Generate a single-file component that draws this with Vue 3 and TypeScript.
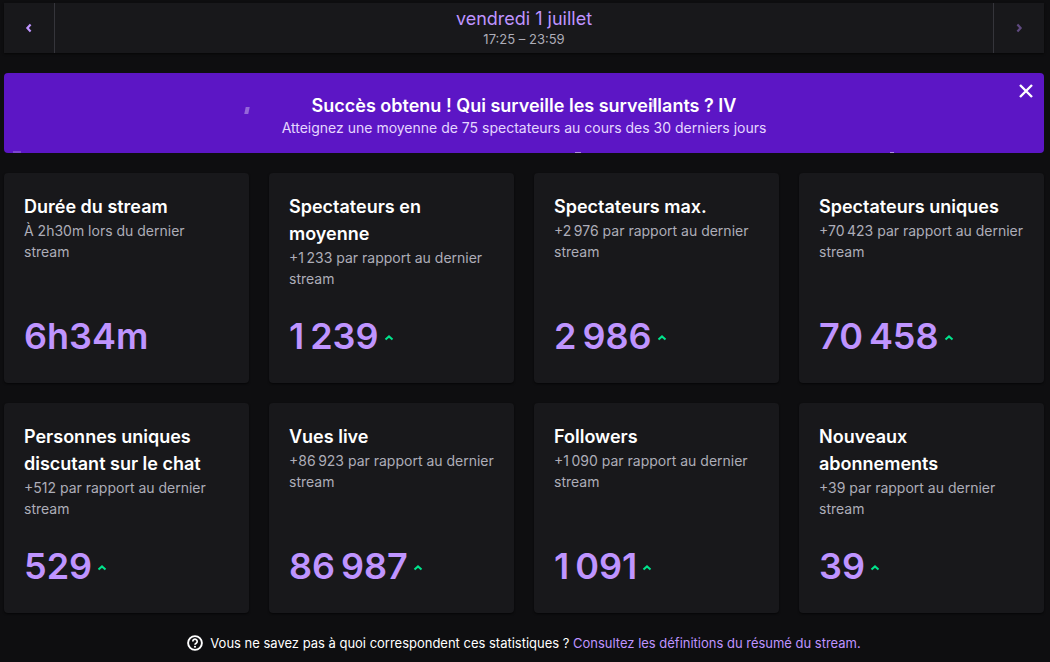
<script setup lang="ts">
interface Stat {
  title: string
  note: string
  value: string
  up: boolean
}

const stats: Stat[] = [
  { title: 'Durée du stream', note: 'À 2h30m lors du dernier stream', value: '6h34m', up: false },
  { title: 'Spectateurs en moyenne', note: '+1\u202f233 par rapport au dernier stream', value: '1\u202f239', up: true },
  { title: 'Spectateurs max.', note: '+2\u202f976 par rapport au dernier stream', value: '2\u202f986', up: true },
  { title: 'Spectateurs uniques', note: '+70\u202f423 par rapport au dernier stream', value: '70\u202f458', up: true },
  { title: 'Personnes uniques discutant sur le chat', note: '+512 par rapport au dernier stream', value: '529', up: true },
  { title: 'Vues live', note: '+86\u202f923 par rapport au dernier stream', value: '86\u202f987', up: true },
  { title: 'Followers', note: '+1\u202f090 par rapport au dernier stream', value: '1\u202f091', up: true },
  { title: 'Nouveaux abonnements', note: '+39 par rapport au dernier stream', value: '39', up: true },
]
</script>

<template>
  <div class="page">
    <header class="date-bar">
      <button class="nav nav--prev" aria-label="Précédent">
        <svg width="10" height="10" viewBox="0 0 10 10"><path d="M6.6 1.6 3.4 5l3.2 3.4" fill="none" stroke="currentColor" stroke-width="2.2" /></svg>
      </button>
      <div class="date">
        <div class="date-title">vendredi 1 juillet</div>
        <div class="date-time">17:25 – 23:59</div>
      </div>
      <button class="nav nav--next" aria-label="Suivant">
        <svg width="10" height="10" viewBox="0 0 10 10"><path d="M3.4 1.6 6.6 5 3.4 8.4" fill="none" stroke="currentColor" stroke-width="2.2" /></svg>
      </button>
    </header>

    <section class="banner">
      <span class="bit bit--a"></span>
      <span class="bit bit--b"></span>
      <span class="bit bit--c"></span>
      <span class="bit bit--d"></span>
      <span class="bit bit--e"></span>
      <h2 class="banner-title">Succès obtenu ! Qui surveille les surveillants ? IV</h2>
      <p class="banner-text">Atteignez une moyenne de 75 spectateurs au cours des 30 derniers jours</p>
      <button class="close" aria-label="Fermer">
        <svg width="14" height="14" viewBox="0 0 14 14"><path d="M1 1 13 13M13 1 1 13" stroke="currentColor" stroke-width="2.4" fill="none" /></svg>
      </button>
    </section>

    <section class="grid">
      <article v-for="stat in stats" :key="stat.title" class="card">
        <div>
          <h3 class="card-title">{{ stat.title }}</h3>
          <p class="card-note">{{ stat.note }}</p>
        </div>
        <div class="card-value">
          <span>{{ stat.value }}</span>
          <svg v-if="stat.up" class="arrow" width="10" height="8" viewBox="0 0 10 8"><path d="M1.5 5.6 5 2.4l3.5 3.2" fill="none" stroke="#00e38c" stroke-width="2" /></svg>
        </div>
      </article>
    </section>

    <footer class="foot">
      <svg width="16" height="16" viewBox="0 0 16 16">
        <circle cx="8" cy="8" r="6.9" fill="none" stroke="#fff" stroke-width="1.9" />
        <path d="M5.8 6.4a2.2 2.2 0 1 1 3.4 1.8c-.8.5-1.2.9-1.2 1.6" fill="none" stroke="#fff" stroke-width="1.7" />
        <circle cx="8" cy="11.8" r="1.05" fill="#fff" />
      </svg>
      <span class="foot-text">Vous ne savez pas à quoi correspondent ces statistiques ? <a class="link">Consultez les définitions du résumé du stream.</a></span>
    </footer>
  </div>
</template>

<style>
html, body {
  margin: 0;
  background: #0e0e10;
}
</style>

<style scoped>
.page {
  height: 662px;
  box-sizing: border-box;
  padding: 3px 6px 0 4px;
  background: #0e0e10;
  color: #fff;
  font-family: Inter, "Liberation Sans", sans-serif;
  display: flex;
  flex-direction: column;
  overflow: hidden;
}

.date-bar {
  height: 50px;
  flex-shrink: 0;
  display: flex;
  background: #18181b;
  box-shadow: 0 1px 2px rgba(0, 0, 0, 0.6);
}

.nav {
  width: 51px;
  padding: 0;
  border: none;
  background: none;
  display: flex;
  align-items: center;
  justify-content: center;
  color: #bf94ff;
}

.nav--prev {
  border-right: 1px solid #35353b;
}

.nav--next {
  border-left: 1px solid #35353b;
  color: #5f4a80;
}

.date {
  flex: 1;
  text-align: center;
}

.date-title {
  margin-top: 5px;
  font-size: 18px;
  line-height: 22px;
  color: #bf94ff;
}

.date-time {
  font-size: 13px;
  line-height: 18px;
  color: #adadb8;
}

.banner {
  position: relative;
  height: 80px;
  flex-shrink: 0;
  margin-top: 20px;
  border-radius: 4px;
  background: #5c16c5;
  text-align: center;
  overflow: hidden;
}

.banner-title {
  margin: 21px 0 0;
  font-size: 18px;
  line-height: 24px;
  font-weight: 600;
}

.banner-text {
  margin: 1px 0 0;
  font-size: 14px;
  line-height: 18px;
  color: #e5d6ff;
}

.close {
  position: absolute;
  top: 11px;
  right: 11px;
  width: 14px;
  height: 14px;
  padding: 0;
  border: none;
  background: none;
  color: #fff;
  display: flex;
}

.bit {
  position: absolute;
  background: #fff;
  opacity: 0.35;
}

.bit--a {
  left: 241px;
  top: 34px;
  width: 4px;
  height: 7px;
  transform: skewX(-12deg);
}

.bit--b {
  left: 9px;
  top: 78px;
  width: 8px;
  height: 2px;
  opacity: 0.2;
}

.bit--c {
  left: 571px;
  top: 79px;
  width: 6px;
  height: 1px;
  opacity: 0.5;
}

.bit--d {
  left: 886px;
  top: 79px;
  width: 4px;
  height: 1px;
  opacity: 0.5;
}

.bit--e {
  left: 648px;
  top: 26px;
  width: 3px;
  height: 8px;
}

.grid {
  margin-top: 20px;
  display: grid;
  grid-template-columns: repeat(4, 245px);
  grid-auto-rows: 210px;
  gap: 20px;
}

.card {
  box-sizing: border-box;
  padding: 20px 20px 24px;
  border-radius: 4px;
  background: #18181b;
  box-shadow: 0 1px 2px rgba(0, 0, 0, 0.6);
  display: flex;
  flex-direction: column;
  justify-content: space-between;
}

.card-title {
  margin: 0;
  font-size: 18px;
  line-height: 27px;
  font-weight: 600;
}

.card-note {
  margin: 0;
  font-size: 14px;
  line-height: 21px;
  color: #adadb8;
}

.card-value {
  display: flex;
  align-items: center;
  gap: 5px;
  font-size: 36px;
  line-height: 45px;
  font-weight: 600;
  color: #bf94ff;
}

.arrow {
  margin-top: 3px;
}

.foot {
  margin-top: 21px;
  display: flex;
  align-items: center;
  justify-content: center;
  gap: 7px;
  font-size: 13px;
  line-height: 18px;
}

.foot-text {
  letter-spacing: -0.01px;
}

.link {
  color: #bf94ff;
}
</style>
